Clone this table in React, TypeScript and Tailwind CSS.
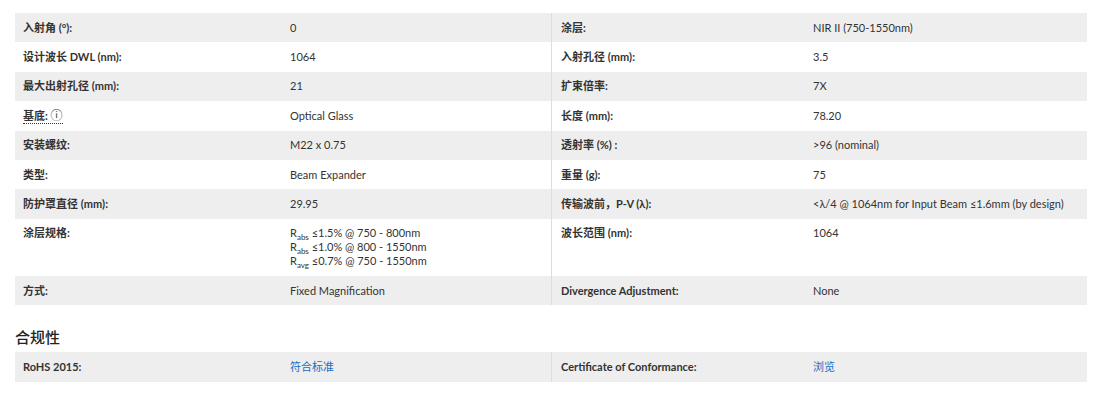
type Spec = { label: React.ReactNode; value: React.ReactNode };

const font = { fontFamily: "Lato, 'Noto Sans CJK SC', sans-serif" };

const Sub = ({ base, sub }: { base: string; sub: string }) => (
  <span>
    {base}
    <span className="text-[8px] leading-none relative top-[3px]">{sub}</span>
  </span>
);

const InfoLabel = () => (
  <span className="border-b border-dotted border-[#333] pb-[1px]">
    基底: <span className="inline-block font-normal text-[12px] leading-[14px]">ⓘ</span>
  </span>
);

const rows: [Spec, Spec][] = [
  [
    { label: "入射角 (°):", value: "0" },
    { label: "涂层:", value: "NIR II (750-1550nm)" },
  ],
  [
    { label: "设计波长 DWL (nm):", value: "1064" },
    { label: "入射孔径 (mm):", value: "3.5" },
  ],
  [
    { label: "最大出射孔径 (mm):", value: "21" },
    { label: "扩束倍率:", value: "7X" },
  ],
  [
    { label: <InfoLabel />, value: "Optical Glass" },
    { label: "长度 (mm):", value: "78.20" },
  ],
  [
    { label: "安装螺纹:", value: "M22 x 0.75" },
    { label: "透射率 (%) :", value: ">96 (nominal)" },
  ],
  [
    { label: "类型:", value: "Beam Expander" },
    { label: "重量 (g):", value: "75" },
  ],
  [
    { label: "防护罩直径 (mm):", value: "29.95" },
    { label: "传输波前，P-V (λ):", value: "<λ/4 @ 1064nm for Input Beam ≤1.6mm (by design)" },
  ],
  [
    {
      label: "涂层规格:",
      value: (
        <div className="flex flex-col">
          <span>
            <Sub base="R" sub="abs" /> ≤1.5% @ 750 - 800nm
          </span>
          <span>
            <Sub base="R" sub="abs" /> ≤1.0% @ 800 - 1550nm
          </span>
          <span>
            <Sub base="R" sub="avg" /> ≤0.7% @ 750 - 1550nm
          </span>
        </div>
      ),
    },
    { label: "波长范围 (nm):", value: "1064" },
  ],
  [
    { label: "方式:", value: "Fixed Magnification" },
    { label: "Divergence Adjustment:", value: "None" },
  ],
];

function Row({ left, right, shaded, link }: { left: Spec; right: Spec; shaded: boolean; link?: boolean }) {
  const bg = shaded ? "bg-[#eeeeee]" : "bg-white";
  const cell = "px-2 py-[7.7px] leading-[14px]";
  const valueColor = link ? "text-[#1a6dc2]" : "text-[#333333]";
  return (
    <div className={`grid grid-cols-[267px_269px_254px_282px] ${bg}`}>
      <div className={`${cell} font-bold text-[#333333]`}>{left.label}</div>
      <div className={`${cell} ${valueColor}`}>{left.value}</div>
      <div className={`${cell} border-l border-[#dddddd] font-bold text-[#333333] pl-[9px]`}>{right.label}</div>
      <div className={`${cell} ${valueColor}`}>{right.value}</div>
    </div>
  );
}

export default function App() {
  return (
    <div className="w-[1095px] h-[402px] bg-white pl-[15px] pt-[13px] text-[11px]" style={font}>
      <div className="w-[1072px]">
        {rows.map(([l, r], i) => (
          <Row key={i} left={l} right={r} shaded={i % 2 === 0} />
        ))}
      </div>
      <h3 className="mt-[22px] mb-[5px] text-[15px] leading-[20px] font-medium text-[#222222]">合规性</h3>
      <div className="w-[1072px]">
        <Row
          left={{ label: "RoHS 2015:", value: "符合标准" }}
          right={{ label: "Certificate of Conformance:", value: "浏览" }}
          shaded
          link
        />
      </div>
    </div>
  );
}
